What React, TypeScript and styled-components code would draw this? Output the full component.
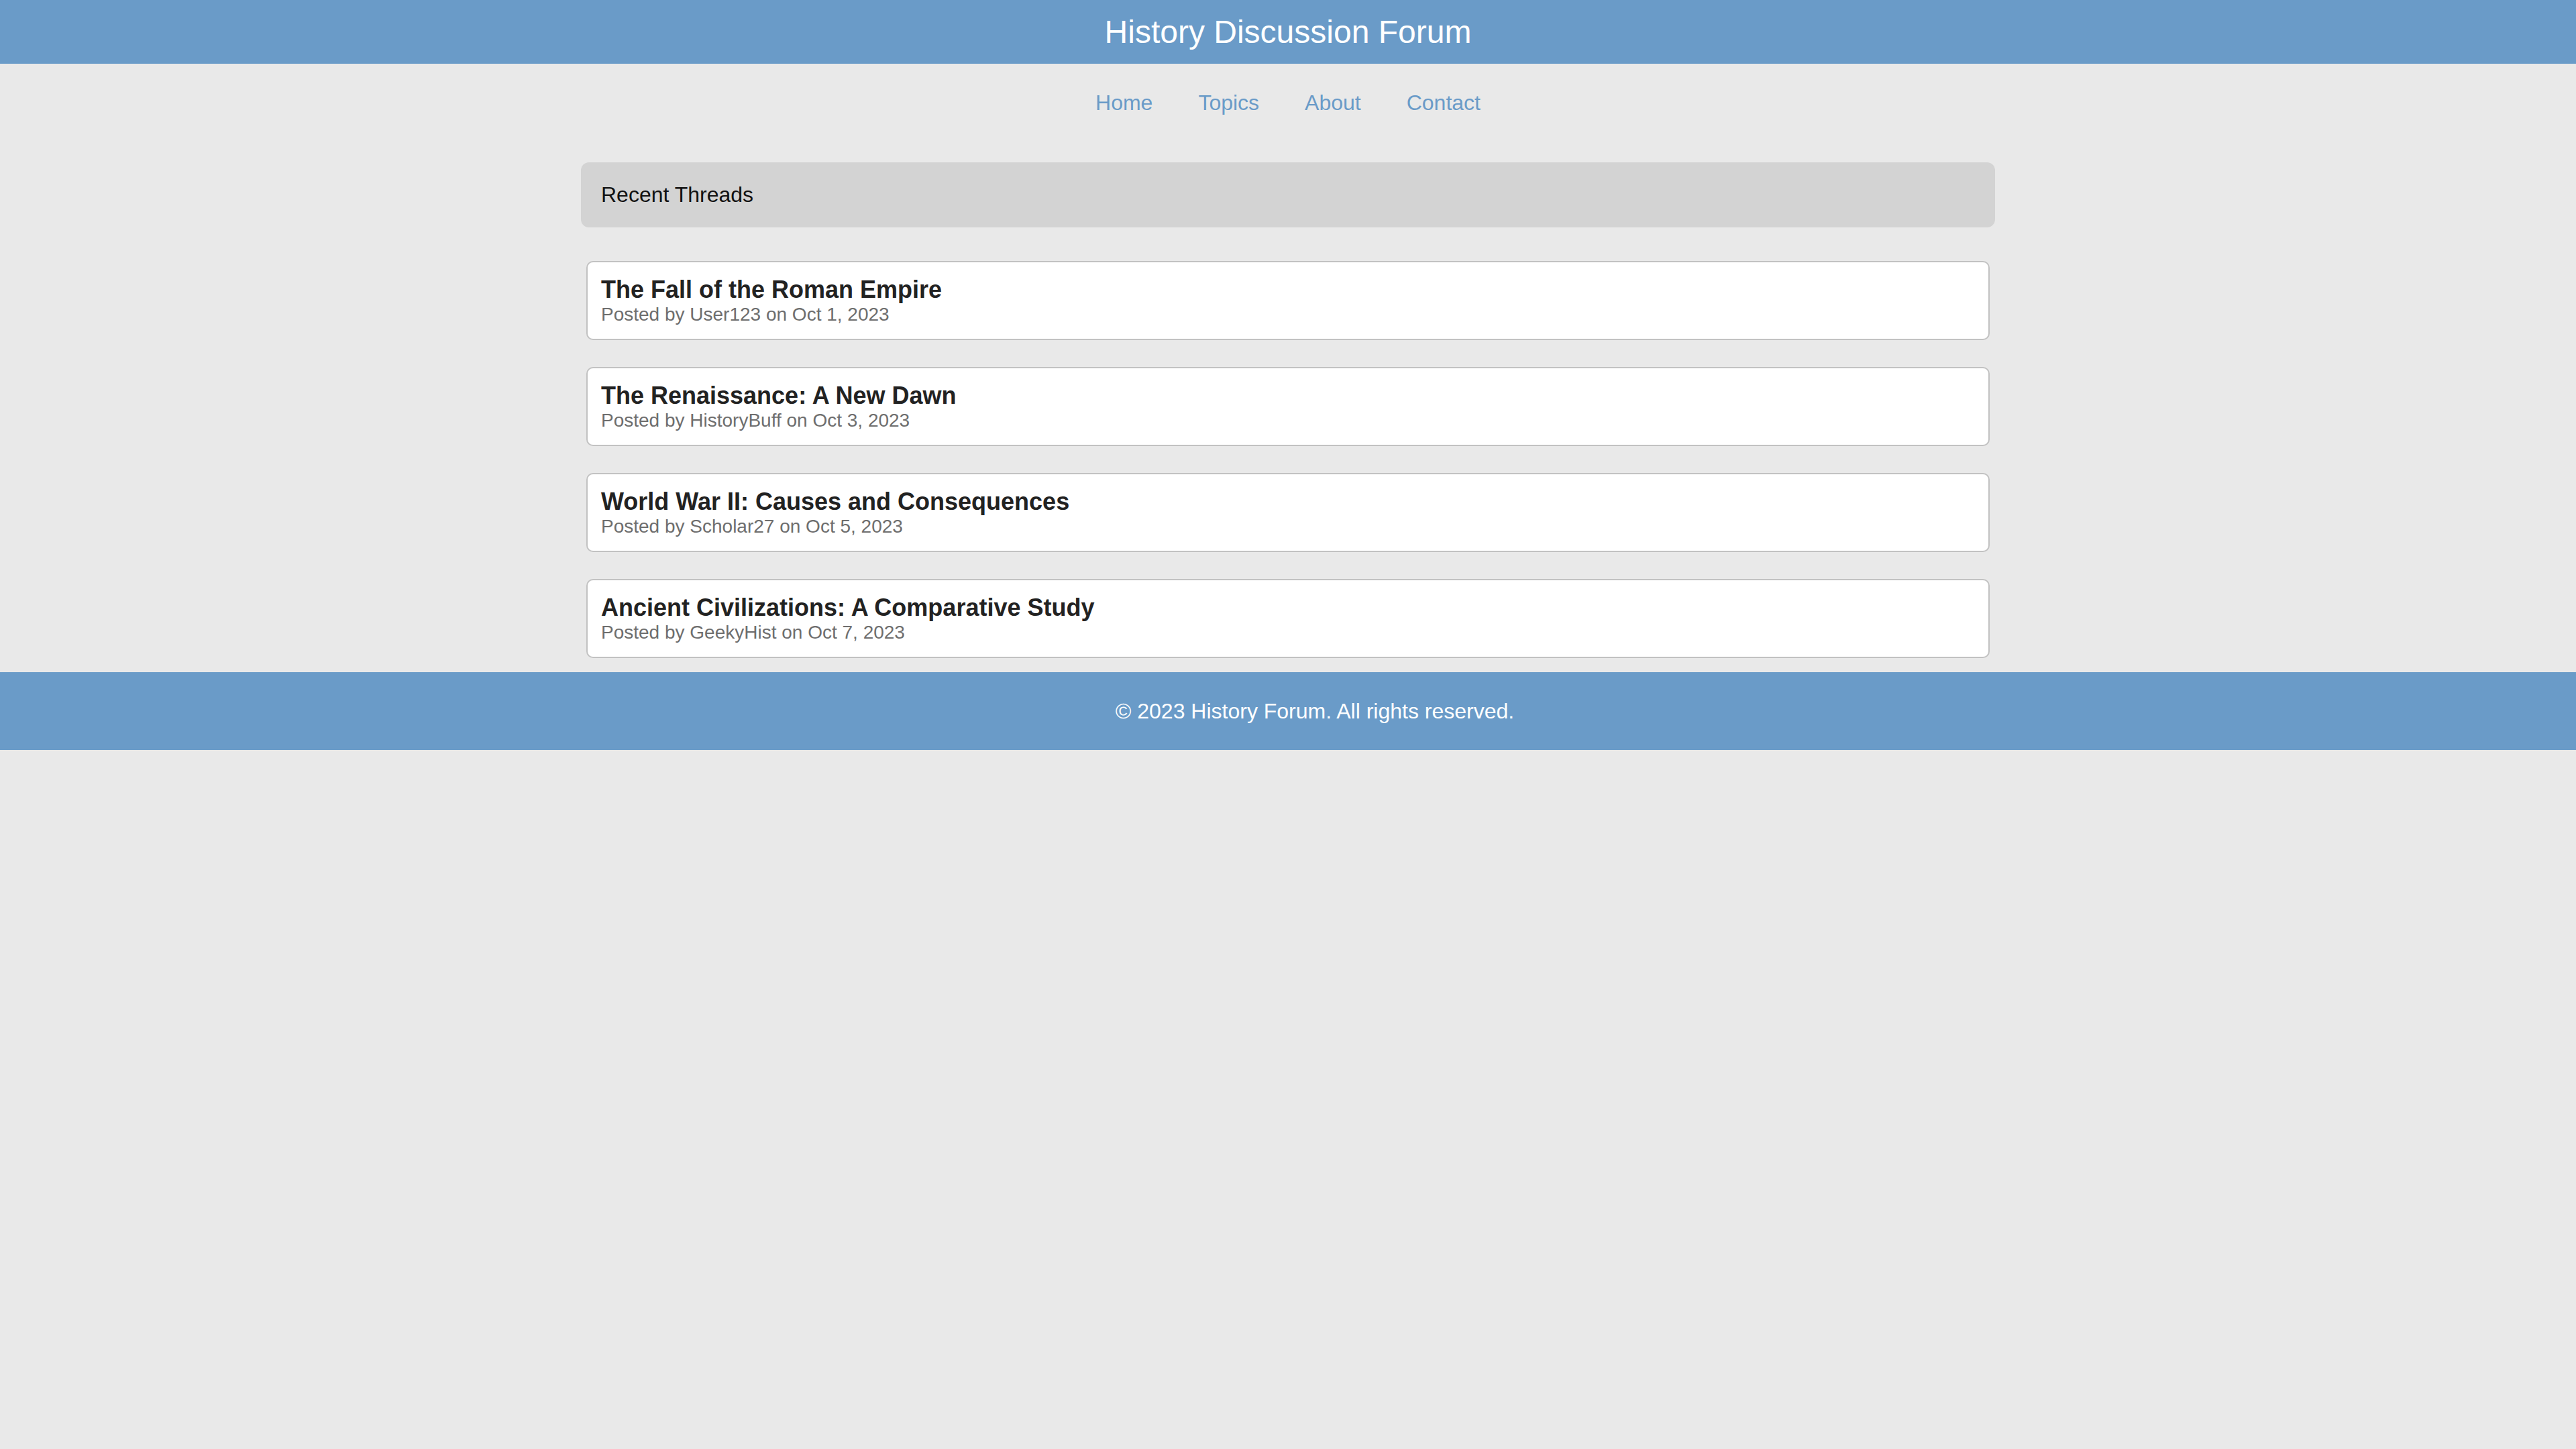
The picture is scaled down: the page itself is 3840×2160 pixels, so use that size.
import styled, { createGlobalStyle } from "styled-components";

const threads = [
  { title: "The Fall of the Roman Empire", author: "User123", date: "Oct 1, 2023" },
  { title: "The Renaissance: A New Dawn", author: "HistoryBuff", date: "Oct 3, 2023" },
  { title: "World War II: Causes and Consequences", author: "Scholar27", date: "Oct 5, 2023" },
  { title: "Ancient Civilizations: A Comparative Study", author: "GeekyHist", date: "Oct 7, 2023" },
];

const navLinks = ["Home", "Topics", "About", "Contact"];

export default function App() {
  return (
    <>
      <GlobalStyle />
      <Header>
        <SiteTitle>History Discussion Forum</SiteTitle>
      </Header>
      <Nav>
        {navLinks.map((label) => (
          <NavLink key={label} href="#">
            {label}
          </NavLink>
        ))}
      </Nav>
      <Main>
        <SectionTitle>Recent Threads</SectionTitle>
        <ThreadList>
          {threads.map((t) => (
            <ThreadCard key={t.title}>
              <ThreadTitle>{t.title}</ThreadTitle>
              <ThreadMeta>
                Posted by {t.author} on {t.date}
              </ThreadMeta>
            </ThreadCard>
          ))}
        </ThreadList>
      </Main>
      <Footer>© 2023 History Forum. All rights reserved.</Footer>
    </>
  );
}

const GlobalStyle = createGlobalStyle`
  html, body {
    margin: 0;
    padding: 0;
    background: #e9e9e9;
    font-family: "Liberation Sans", Arial, sans-serif;
  }
  * {
    box-sizing: border-box;
  }
`;

const Header = styled.header`
  background: #6a9bc8;
  padding: 20px 0;
  text-align: center;
`;

const SiteTitle = styled.h1`
  margin: 0;
  color: #ffffff;
  font-size: 48px;
  font-weight: normal;
  line-height: 55px;
`;

const Nav = styled.nav`
  display: flex;
  justify-content: center;
  gap: 68px;
  padding: 40px 0 71px;
`;

const NavLink = styled.a`
  color: #6a9bc8;
  font-size: 32px;
  line-height: 36px;
  text-decoration: none;
`;

const Main = styled.main`
  width: 2108px;
  margin: 0 auto;
`;

const SectionTitle = styled.h2`
  margin: 0;
  background: #d3d3d3;
  border-radius: 12px;
  padding: 30px;
  font-size: 32px;
  font-weight: normal;
  line-height: 37px;
  color: #111;
`;

const ThreadList = styled.ul`
  list-style: none;
  margin: 50px 0 0;
  padding: 0 8px;
  display: flex;
  flex-direction: column;
  gap: 40px;
`;

const ThreadCard = styled.li`
  background: #ffffff;
  border: 2px solid #c2c2c2;
  border-radius: 10px;
  padding: 20px;
`;

const ThreadTitle = styled.h3`
  margin: 0;
  font-size: 36px;
  font-weight: bold;
  line-height: 42px;
  color: #222;
`;

const ThreadMeta = styled.p`
  margin: 0;
  font-size: 28px;
  line-height: 32px;
  color: #6e6e6e;
`;

const Footer = styled.footer`
  margin-top: 21px;
  background: #6a9bc8;
  color: #ffffff;
  text-align: center;
  font-size: 32px;
  line-height: 36px;
  padding: 40px 0 40px 80px;
`;
